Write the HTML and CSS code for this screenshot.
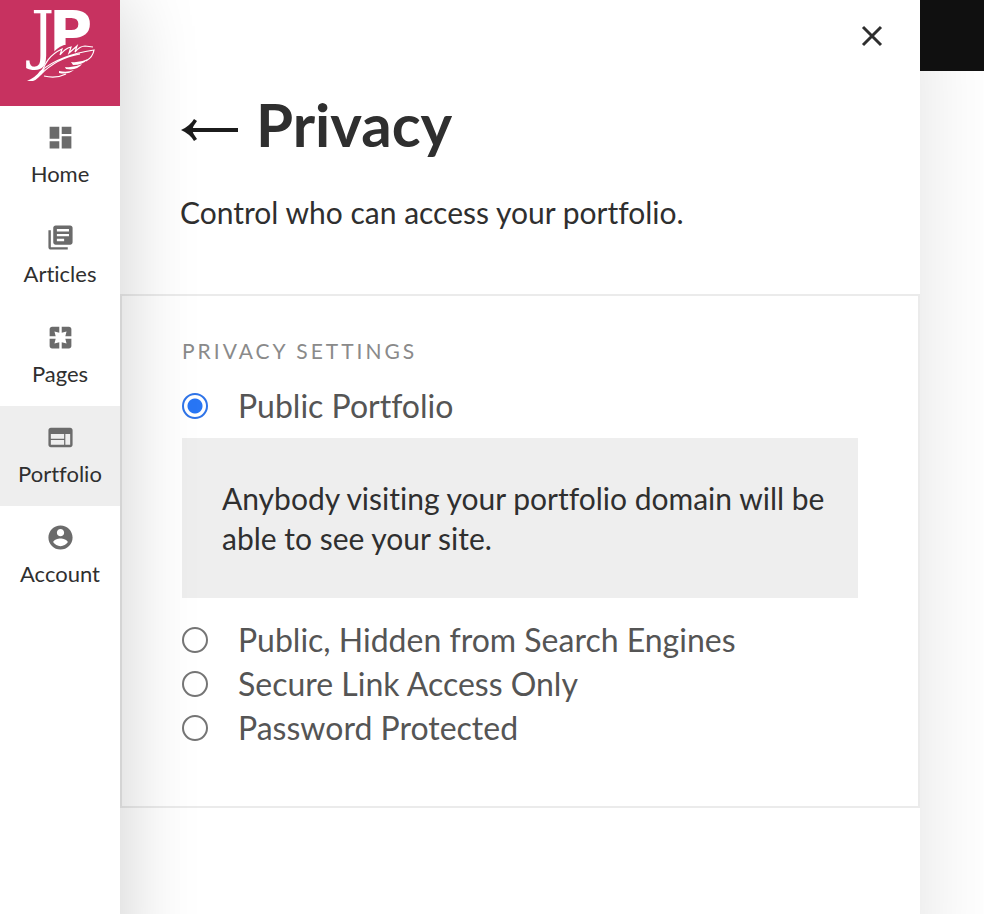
FILE: index.html
```html
<!DOCTYPE html>
<html lang="en">
<head>
<meta charset="utf-8">
<title>Privacy</title>
<link rel="stylesheet" href="styles.css">
</head>
<body>
<div class="app">
  <nav class="sidebar">
    <a class="brand" href="#" aria-label="JP">
      <svg class="brand-logo" viewBox="0 0 120 106">
        <text class="logo-p" x="49" y="53">P</text>
        <path class="logo-cut" d="M50 56 Q56 48 64 45 L96 44 L98 58 L50 72z"/>
        <text class="logo-j" x="31" y="57">J</text>
        <path class="logo-fill" d="M27 81 Q36 77 40 71 L45 69 Q39 79 33 81z"/>
        <path class="logo-line" d="M42 71 C45 64 49 55 62 49 L60 55 C63 51 67 48 71 47 L69 53 L77 46 L75 52 Q80 46 85 46 L93 47"/>
        <path class="logo-line" d="M41 71 C56 58 74 53 94 50 Q93 57 86 61 M40 75 C50 65 62 57 80 54 M44 76 Q56 79 66 74"/>
        <path class="logo-fill" d="M71 62 Q80 63 88 59 Q83 65 73 65z M65 67 Q74 68 82 64 Q77 71 66 69z M59 71 Q67 73 74 70 Q68 75 59 73z"/>
      </svg>
    </a>
    <a class="nav-item" href="#">
      <svg class="nav-icon" viewBox="0 0 24 24"><path d="M3 13h8V3H3v10zm0 8h8v-6H3v6zm10 0h8V11h-8v10zm0-18v6h8V3h-8z"/></svg>
      Home
    </a>
    <a class="nav-item" href="#">
      <svg class="nav-icon" viewBox="0 0 24 24"><path d="M4 6H2v14c0 1.1.9 2 2 2h14v-2H4V6zm16-4H8c-1.1 0-2 .9-2 2v12c0 1.1.9 2 2 2h12c1.1 0 2-.9 2-2V4c0-1.1-.9-2-2-2zm-1 9H9V9h10v2zm-4 4H9v-2h6v2zm4-8H9V5h10v2z"/></svg>
      Articles
    </a>
    <a class="nav-item" href="#">
      <svg class="nav-icon" viewBox="0 0 24 24"><path d="M3 5v6h5L7 7l4 1V3H5c-1.1 0-2 .9-2 2zm5 8H3v6c0 1.1.9 2 2 2h6v-5l-4 1 1-4zm9 4l-4-1v5h6c1.1 0 2-.9 2-2v-6h-5l1 4zm2-14h-6v5l4-1-1 4h5V5c0-1.1-.9-2-2-2z"/></svg>
      Pages
    </a>
    <a class="nav-item active" href="#" aria-current="page">
      <svg class="nav-icon" viewBox="0 0 24 24"><path d="M20 4H4c-1.1 0-1.99.9-1.99 2L2 18c0 1.1.9 2 2 2h16c1.1 0 2-.9 2-2V6c0-1.1-.9-2-2-2zm-5 14H4v-4h11v4zm0-5H4V9h11v4zm5 5h-4V9h4v9z"/></svg>
      Portfolio
    </a>
    <a class="nav-item" href="#">
      <svg class="nav-icon" viewBox="0 0 24 24"><path d="M12 2C6.48 2 2 6.48 2 12s4.480 10 10 10 10-4.480 10-10S17.520 2 12 2zm0 3c1.660 0 3 1.340 3 3s-1.340 3-3 3-3-1.340-3-3 1.340-3 3-3zm0 14.200c-2.500 0-4.710-1.280-6-3.220.030-1.990 4-3.080 6-3.080 1.990 0 5.970 1.090 6 3.080-1.290 1.940-3.500 3.220-6 3.220z"/></svg>
      Account
    </a>
  </nav>

  <main class="panel">
    <div class="panel-top">
      <button class="icon-button" type="button" aria-label="Close">
        <svg class="close-icon" viewBox="0 0 24 24"><path d="M3 3L21 21M21 3L3 21"/></svg>
      </button>
    </div>
    <header class="panel-header">
      <div class="title-row">
        <button class="icon-button back-button" type="button" aria-label="Back">
          <svg class="back-icon" viewBox="0 0 60 26"><path class="back-shaft" d="M8 13H58"/><path class="back-head" d="M1 13 Q10 9 14 2 L17 4 Q13 9 12 13 Q13 17 17 22 L14 24 Q10 17 1 13z"/></svg>
        </button>
        <h1 class="title">Privacy</h1>
      </div>
      <p class="intro">Control who can access your portfolio.</p>
    </header>

    <form class="settings">
      <fieldset class="options">
        <legend class="legend">PRIVACY SETTINGS</legend>
        <label class="option"><input class="radio" type="radio" name="privacy" checked>Public Portfolio</label>
        <p class="note">Anybody visiting your portfolio domain will be able to see your site.</p>
        <label class="option"><input class="radio" type="radio" name="privacy">Public, Hidden from Search Engines</label>
        <label class="option"><input class="radio" type="radio" name="privacy">Secure Link Access Only</label>
        <label class="option"><input class="radio" type="radio" name="privacy">Password Protected</label>
      </fieldset>
    </form>
  </main>

  <div class="site"><div class="site-bar"></div></div>
</div>
</body>
</html>
```
FILE: styles.css
```css
* { box-sizing: border-box; }

body {
  margin: 0;
  font-family: Lato, "Liberation Sans", sans-serif;
  font-variant-ligatures: none;
  color: #2f2f2f;
  background: #fff;
}

.app {
  display: grid;
  grid-template-columns: 120px minmax(0, 800px) 1fr;
  min-height: 100vh;
  overflow: hidden;
}

/* The columns run past the bottom edge so their shadows do not fade there. */
.sidebar,
.panel {
  position: relative;
  margin-bottom: -80px;
  background: #fff;
}

.sidebar {
  z-index: 2;
  box-shadow: 0 0 80px rgba(0, 0, 0, 0.2);
}

.brand {
  display: block;
  height: 106px;
  background: #c73260;
}

.brand-logo { display: block; width: 120px; height: 106px; }
.logo-p { font: bold 59px "DejaVu Sans", sans-serif; fill: #fff; }
.logo-j { font: 64px "DejaVu Serif Condensed", "DejaVu Serif", serif; fill: #fff; }
.logo-cut { fill: #c73260; }
.logo-fill { fill: #fff; }
.logo-line { fill: none; stroke: #fff; stroke-width: 1.2; }

.nav-item {
  display: flex;
  flex-direction: column;
  align-items: center;
  gap: 7px;
  height: 100px;
  padding-top: 17px;
  font-size: 22px;
  line-height: 30px;
  color: #2f2f2f;
  text-decoration: none;
}

.nav-item.active { background: #eee; }
.nav-icon { width: 29px; height: 29px; fill: #6b6b6b; }

.panel {
  z-index: 1;
  box-shadow: 0 0 80px rgba(0, 0, 0, 0.12);
}

.panel-top {
  display: flex;
  justify-content: flex-end;
  padding: 24px 36px 0;
}

.icon-button {
  display: block;
  padding: 0;
  border: 0;
  background: none;
}

.back-button { padding-top: 12px; }

.close-icon {
  display: block;
  width: 24px;
  height: 24px;
  fill: none;
  stroke: #2f2f2f;
  stroke-width: 3;
}

.panel-header { padding: 36px 60px 62px; }

.title-row {
  display: flex;
  align-items: center;
  gap: 16px;
}

.back-icon { display: block; width: 60px; height: 26px; }
.back-shaft { stroke: #1c1c1c; stroke-width: 4; }
.back-head { fill: #1c1c1c; }

.title {
  margin: 0;
  font-size: 60px;
  line-height: 80px;
  font-weight: 700;
}

.intro {
  margin: 28px 0 0;
  font-size: 30px;
  line-height: 40px;
}

.settings {
  padding: 40px 60px 56px;
  border: 2px solid #ebebeb;
}

.options { margin: 0; padding: 0; border: 0; min-width: 0; }

.legend {
  padding: 0;
  margin-bottom: 18px;
  font-size: 21px;
  line-height: 30px;
  letter-spacing: 3px;
  color: #8a8a8a;
}

.option {
  display: flex;
  align-items: center;
  gap: 30px;
  font-size: 32px;
  line-height: 44px;
  color: #555;
}

.radio {
  appearance: none;
  flex: none;
  width: 26px;
  height: 26px;
  margin: 0;
  border: 2px solid #757575;
  border-radius: 50%;
  background: #fff;
}

.radio:checked {
  border-color: #2f74e8;
  background: radial-gradient(circle, #2876f5 0 7px, #fff 8px);
}

.note {
  margin: 10px 0 20px;
  padding: 40px 24px 40px 40px;
  font-size: 30px;
  line-height: 40px;
  background: #eee;
}

.site-bar {
  height: 71px;
  background: #111;
}
```
